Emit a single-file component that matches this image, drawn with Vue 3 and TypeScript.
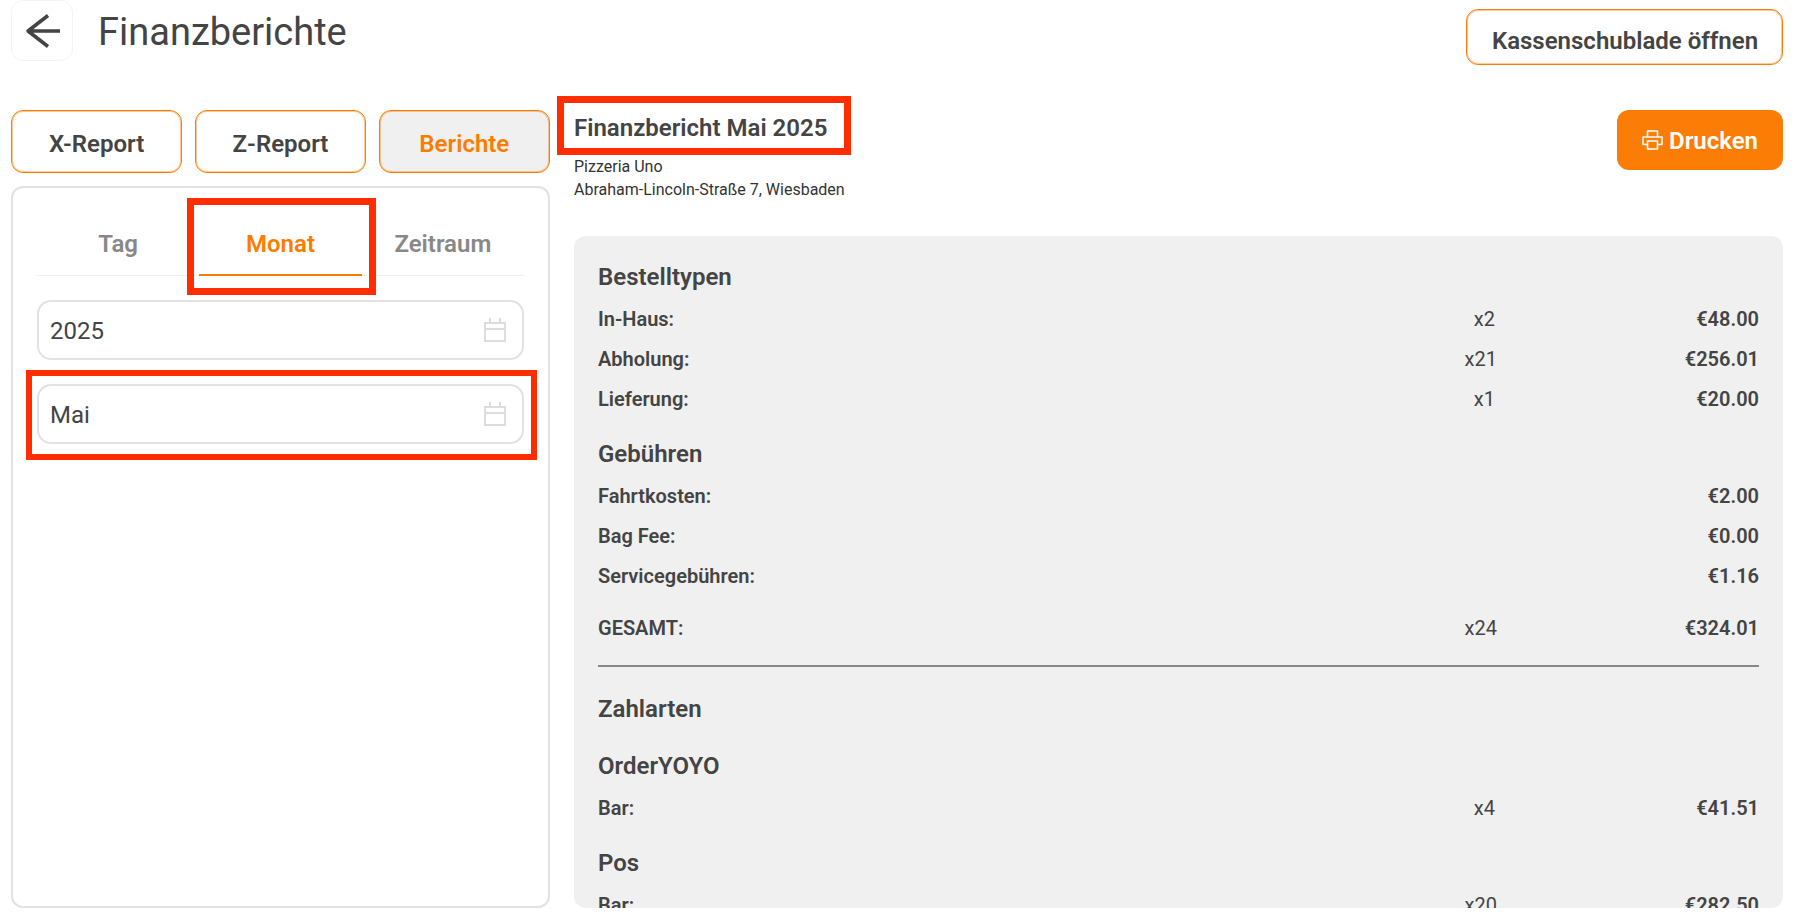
<script setup lang="ts">
interface Row { label: string; count?: string; amount: string }
interface Section { title: string; rows: Row[] }

const sectionsTop: Section[] = [
  {
    title: 'Bestelltypen',
    rows: [
      { label: 'In-Haus:', count: 'x2', amount: '€48.00' },
      { label: 'Abholung:', count: 'x21', amount: '€256.01' },
      { label: 'Lieferung:', count: 'x1', amount: '€20.00' },
    ],
  },
  {
    title: 'Gebühren',
    rows: [
      { label: 'Fahrtkosten:', amount: '€2.00' },
      { label: 'Bag Fee:', amount: '€0.00' },
      { label: 'Servicegebühren:', amount: '€1.16' },
    ],
  },
]
const sectionsBottom: Section[] = [
  { title: 'OrderYOYO', rows: [{ label: 'Bar:', count: 'x4', amount: '€41.51' }] },
  { title: 'Pos', rows: [{ label: 'Bar:', count: 'x20', amount: '€282.50' }] },
]
const reportTabs = ['X-Report', 'Z-Report', 'Berichte']
const periodTabs = ['Tag', 'Monat', 'Zeitraum']
const fields = ['2025', 'Mai']
</script>

<template>
  <div class="page">
    <header class="top">
      <div class="top-left">
        <button class="back" aria-label="Zurück">
          <svg width="36" height="36" viewBox="0 0 36 36" fill="none" stroke="#444" stroke-width="3.500" stroke-linejoin="round">
            <path d="M35 18H3M23 2.500 3 18l20 15.500" />
          </svg>
        </button>
        <h1 class="title">Finanzberichte</h1>
      </div>
      <button class="outline drawer">Kassenschublade öffnen</button>
    </header>

    <main class="main">
      <aside class="left">
        <div class="report-tabs">
          <button
            v-for="(t, i) in reportTabs"
            :key="t"
            class="outline report-tab"
            :class="{ on: i === 2 }"
          >{{ t }}</button>
        </div>
        <section class="panel">
          <div class="period-tabs">
            <div v-for="(t, i) in periodTabs" :key="t" class="period-tab" :class="{ on: i === 1 }">
              {{ t }}
              <span v-if="i === 1" class="mark mark-tab"></span>
            </div>
          </div>
          <div v-for="(f, i) in fields" :key="f" class="field">
            <span>{{ f }}</span>
            <svg width="24" height="24" viewBox="0 0 24 24" fill="none" stroke="#ddd" stroke-width="2">
              <path d="M2 5h20v18H2zM2 11h20M7 0v5M17 0v5" />
            </svg>
            <span v-if="i === 1" class="mark mark-field"></span>
          </div>
        </section>
      </aside>

      <div class="right">
        <div class="right-head">
          <div>
            <h2 class="report-title">
              Finanzbericht Mai 2025
              <span class="mark mark-title"></span>
            </h2>
            <p class="addr">Pizzeria Uno</p>
            <p class="addr">Abraham-Lincoln-Straße 7, Wiesbaden</p>
          </div>
          <button class="print">
            <svg width="21" height="20" viewBox="0 0 21 20" fill="none" stroke="#fff" stroke-width="1.600" stroke-linejoin="round">
              <path d="M5.500 7V1h10v6M5.500 14.500H1V7h19v7.500h-4.500" />
              <path d="M5.500 11h10v8h-10z" />
            </svg>
            <span class="print-text">Drucken</span>
          </button>
        </div>

        <div class="card">
          <div v-for="s in sectionsTop" :key="s.title" class="section">
            <h3 class="sec-title">{{ s.title }}</h3>
            <div v-for="r in s.rows" :key="r.label" class="row">
              <span class="label">{{ r.label }}</span>
              <span class="count" :class="{ short: r.count && r.count.length < 3 }">{{ r.count }}</span>
              <span class="amount">{{ r.amount }}</span>
            </div>
          </div>
          <div class="row total">
            <span class="label">GESAMT:</span>
            <span class="count">x24</span>
            <span class="amount">€324.01</span>
          </div>
          <hr class="rule" />
          <h3 class="sec-title pay">Zahlarten</h3>
          <div v-for="s in sectionsBottom" :key="s.title" class="section">
            <h3 class="sec-title">{{ s.title }}</h3>
            <div v-for="r in s.rows" :key="r.label" class="row">
              <span class="label">{{ r.label }}</span>
              <span class="count" :class="{ short: r.count && r.count.length < 3 }">{{ r.count }}</span>
              <span class="amount">{{ r.amount }}</span>
            </div>
          </div>
        </div>
      </div>
    </main>
  </div>
</template>

<style>
html, body { margin: 0; background: #fff; overflow: hidden; }
</style>

<style scoped>
.page {
  box-sizing: border-box;
  width: 1795px;
  height: 920px;
  padding: 0 12px 12px 11px;
  display: flex;
  flex-direction: column;
  font-family: Roboto, "Liberation Sans", sans-serif;
  color: #444;
  background: #fff;
  overflow: hidden;
}
button { font-family: inherit; cursor: pointer; }
h1, h2, h3, p { margin: 0; }

.top {
  flex: 0 0 110px;
  display: flex;
  justify-content: space-between;
  align-items: flex-start;
}
.top-left { display: flex; align-items: flex-start; gap: 25px; }
.back {
  width: 62px;
  height: 61px;
  padding: 0 0 0 2px;
  display: flex;
  align-items: center;
  justify-content: center;
  background: #fff;
  border: 1px solid #f3f3f3;
  border-radius: 12px;
}
.title { font-size: 38px; font-weight: 400; line-height: 64px; color: #444; }

.outline {
  box-sizing: border-box;
  background: #fff;
  border: 1px solid #fb7d05;
  box-shadow: inset 0 0 0 1px rgba(251, 125, 5, 0.4);
  border-radius: 12px;
  color: #444;
  font-size: 24px;
  font-weight: 600;
}
.drawer { width: 317px; height: 56px; margin-top: 9px; padding: 7px 0 0 1px; }

.main { flex: 1; min-height: 0; display: flex; gap: 24px; }

.left { flex: 0 0 539px; display: flex; flex-direction: column; }
.report-tabs { display: flex; gap: 12.5px; margin-bottom: 13px; }
.report-tab { flex: 1; height: 63px; padding: 4px 0 0; }
.report-tab.on { background: #f0f0f0; color: #fb7d00; }

.panel {
  flex: 1;
  box-sizing: border-box;
  border: 2px solid #e2e2e2;
  border-radius: 12px;
  padding: 0 24px;
}
.period-tabs {
  display: flex;
  height: 87px;
  border-bottom: 1px solid #f0f0f0;
  margin-bottom: 24px;
}
.period-tab {
  position: relative;
  flex: 1;
  display: flex;
  align-items: center;
  justify-content: center;
  padding-top: 25px;
  font-size: 24px;
  font-weight: 600;
  color: #888;
  box-sizing: border-box;
  margin-bottom: -1px;
  border-bottom: 2px solid transparent;
}
.period-tab.on { color: #fb7d00; border-bottom-color: #fb7d00; }

.field {
  position: relative;
  box-sizing: border-box;
  height: 60px;
  margin-bottom: 24px;
  padding: 2px 15px 0 11px;
  display: flex;
  align-items: center;
  justify-content: space-between;
  border: 2px solid #e2e2e2;
  border-radius: 14px;
  font-size: 24px;
  color: #444;
}
.field svg { margin-top: -2px; }

.mark {
  position: absolute;
  border: 7px solid #ff2d00;
  pointer-events: none;
}
.mark-tab { left: -12px; right: -14px; top: 10px; bottom: -21px; }
.mark-field { left: -13px; right: -15px; top: -16px; bottom: -18px; border-width: 6px; }
.mark-title { left: -17px; width: 294px; box-sizing: border-box; top: -18px; height: 59px; }

.right { flex: 1; min-width: 0; display: flex; flex-direction: column; }
.right-head {
  flex: 0 0 126px;
  display: flex;
  justify-content: space-between;
  align-items: flex-start;
}
.report-title {
  position: relative;
  font-size: 24px;
  font-weight: 600;
  line-height: 29px;
  margin: 4px 0 12px;
  color: #444;
}
.addr { font-size: 16px; line-height: 23px; color: #333; }
.print {
  box-sizing: border-box;
  width: 166px;
  height: 60px;
  padding: 0;
  display: flex;
  align-items: center;
  justify-content: center;
  gap: 6px;
  background: #fb7d05;
  color: #fff;
  border: 0;
  border-radius: 12px;
  font-size: 24px;
  font-weight: 600;
}
.print-text { position: relative; top: 1px; }

.card {
  flex: 1;
  min-height: 0;
  overflow: hidden;
  box-sizing: border-box;
  padding: 19px 24px 0;
  background: #f0f0f0;
  border-radius: 12px;
}
.section + .section { margin-top: 13px; }
.sec-title {
  font-size: 24px;
  font-weight: 600;
  line-height: 44px;
  color: #444;
}
.row {
  display: grid;
  grid-template-columns: 1fr 120px 262px;
  height: 40px;
  align-items: center;
  font-size: 20px;
  color: #444;
}
.label { font-weight: 600; }
.count { text-align: right; }
.count.short { padding-right: 2px; }
.amount { text-align: right; font-weight: 600; }
.total { margin-top: 12px; }
.rule {
  margin: 17px 0 0;
  border: 0;
  height: 2px;
  background: #888;
}
.pay { margin-top: 20px; margin-bottom: 13px; }
</style>
